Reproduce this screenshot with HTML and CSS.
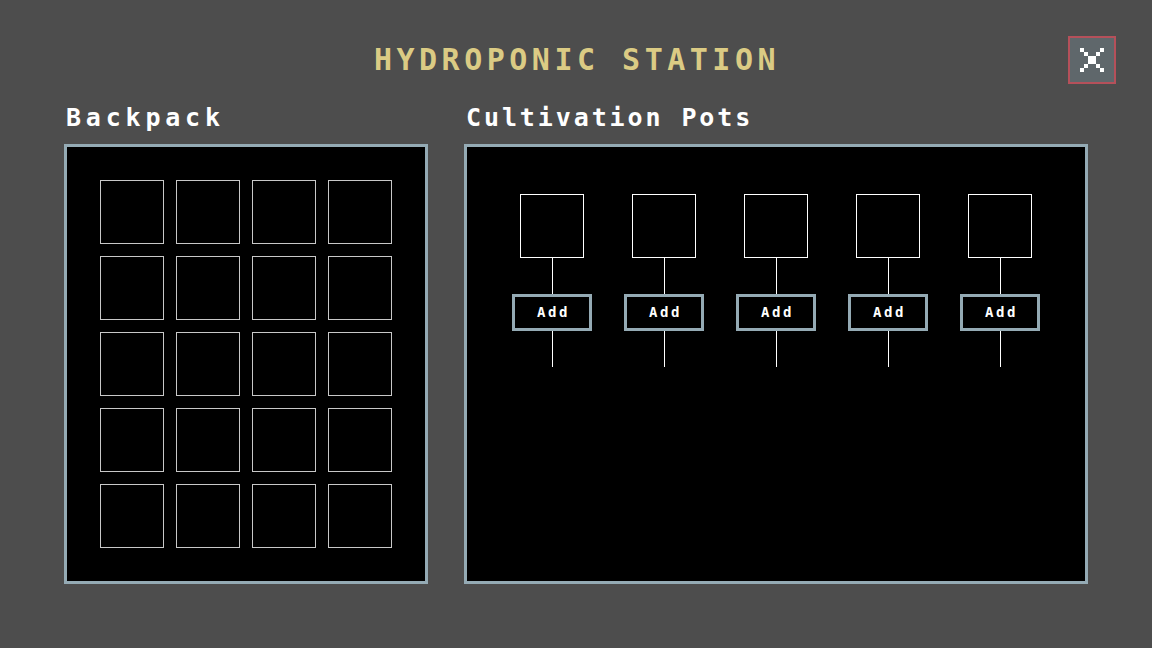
FILE: index.html
```html
<!DOCTYPE html>
<html>
<head>
<meta charset="utf-8">
<link rel="stylesheet" href="styles.css">
</head>
<body>
<div class="screen">
  <header class="header">
    <div></div>
    <h1 class="title">HYDROPONIC STATION</h1>
    <button class="close" aria-label="Close">
      <svg width="24" height="24" viewBox="0 0 24 24" shape-rendering="crispEdges">
        <g fill="#ffffff">
          <rect x="0" y="0" width="4" height="4"/>
          <rect x="4" y="4" width="4" height="4"/>
          <rect x="8" y="8" width="8" height="8"/>
          <rect x="16" y="16" width="4" height="4"/>
          <rect x="20" y="20" width="4" height="4"/>
          <rect x="20" y="0" width="4" height="4"/>
          <rect x="16" y="4" width="4" height="4"/>
          <rect x="4" y="16" width="4" height="4"/>
          <rect x="0" y="20" width="4" height="4"/>
        </g>
      </svg>
    </button>
  </header>
  <main class="main">
    <section class="col col-backpack">
      <h2 class="label">Backpack</h2>
      <div class="panel backpack">
        <div class="slot"></div><div class="slot"></div><div class="slot"></div><div class="slot"></div>
        <div class="slot"></div><div class="slot"></div><div class="slot"></div><div class="slot"></div>
        <div class="slot"></div><div class="slot"></div><div class="slot"></div><div class="slot"></div>
        <div class="slot"></div><div class="slot"></div><div class="slot"></div><div class="slot"></div>
        <div class="slot"></div><div class="slot"></div><div class="slot"></div><div class="slot"></div>
      </div>
    </section>
    <section class="col col-pots">
      <h2 class="label">Cultivation Pots</h2>
      <div class="panel pots">
        <div class="pot"><div class="pot-box"></div><div class="wire"></div><button class="add">Add</button><div class="wire"></div></div>
        <div class="pot"><div class="pot-box"></div><div class="wire"></div><button class="add">Add</button><div class="wire"></div></div>
        <div class="pot"><div class="pot-box"></div><div class="wire"></div><button class="add">Add</button><div class="wire"></div></div>
        <div class="pot"><div class="pot-box"></div><div class="wire"></div><button class="add">Add</button><div class="wire"></div></div>
        <div class="pot"><div class="pot-box"></div><div class="wire"></div><button class="add">Add</button><div class="wire"></div></div>
      </div>
    </section>
  </main>
</div>
</body>
</html>
```
FILE: styles.css
```css
html, body {
  margin: 0;
  padding: 0;
  background: #4d4d4d;
}
body {
  width: 1152px;
  height: 648px;
  overflow: hidden;
  font-family: "DejaVu Sans Mono", "Liberation Mono", monospace;
}
.screen {
  padding: 36px 36px 0 64px;
}
.header {
  display: grid;
  grid-template-columns: 1fr auto 1fr;
  align-items: center;
  height: 48px;
}
.title {
  margin: 0;
  padding-left: 4px;
  font-size: 30px;
  line-height: 48px;
  font-weight: bold;
  letter-spacing: 4.5px;
  color: #dbcb84;
  transform: translateX(-15px);
}
.close {
  justify-self: end;
  width: 48px;
  height: 48px;
  box-sizing: border-box;
  border: 2px solid #b5505a;
  background: #5f676b;
  padding: 0;
  display: flex;
  align-items: center;
  justify-content: center;
}
.close svg { display: block; }
.main {
  display: flex;
  gap: 36px;
  margin-top: 12px;
  padding-right: 28px;
}
.col-backpack { width: 364px; }
.col-pots { flex: 1; }
.label {
  margin: 4px 0 8px 2px;
  height: 36px;
  font-size: 25px;
  line-height: 36px;
  font-weight: bold;
  color: #ffffff;
  letter-spacing: 4.8px;
}
.col-pots .label { letter-spacing: 2.9px; }
.panel {
  box-sizing: border-box;
  height: 440px;
  border: 3px solid #94aab4;
  background: #000000;
}
.backpack {
  display: grid;
  grid-template-columns: repeat(4, 64px);
  grid-auto-rows: 64px;
  gap: 12px;
  padding: 33px;
}
.slot {
  box-sizing: border-box;
  border: 1px solid #c8c8c8;
}
.pots {
  display: flex;
  justify-content: center;
  align-items: flex-start;
  gap: 32px;
  padding-top: 47px;
}
.pot {
  width: 80px;
  display: flex;
  flex-direction: column;
  align-items: center;
}
.pot-box {
  box-sizing: border-box;
  width: 64px;
  height: 64px;
  border: 1px solid #ffffff;
}
.wire {
  width: 1px;
  height: 36px;
  background: #ffffff;
}
.add {
  box-sizing: border-box;
  width: 80px;
  height: 37px;
  border: 3px solid #94aab4;
  background: #000000;
  color: #ffffff;
  font-family: "DejaVu Sans Mono", "Liberation Mono", monospace;
  font-size: 14px;
  font-weight: bold;
  letter-spacing: 2.6px;
  padding: 0 0 2px 3px;
}
```
